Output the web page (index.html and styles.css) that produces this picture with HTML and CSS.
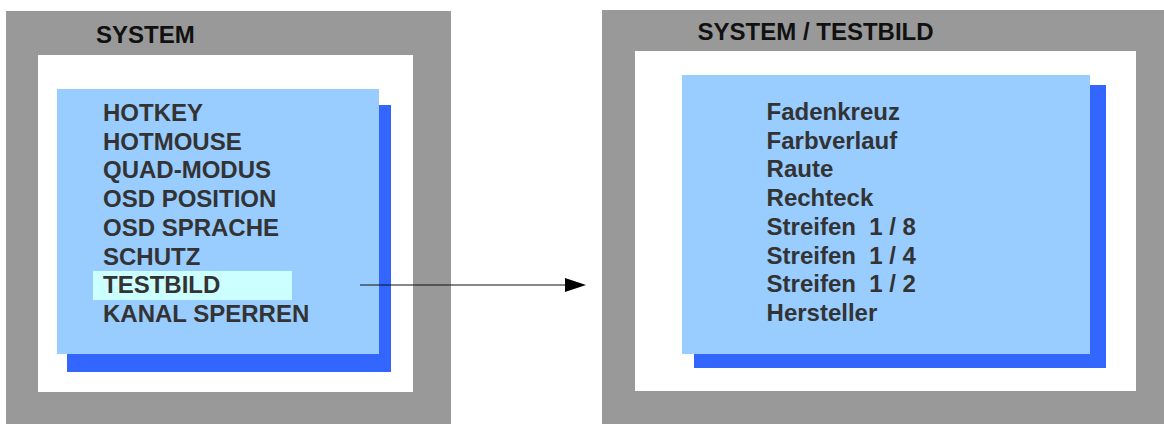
FILE: index.html
```html
<!DOCTYPE html>
<html lang="de">
<head>
  <meta charset="UTF-8">
  <title>OSD Menü System / Testbild</title>
  <link rel="stylesheet" href="styles.css">
</head>
<body>
  <div class="screens">
    <div class="panel panel-left">
      <div class="title">SYSTEM</div>
      <div class="screen">
        <ul class="menu">
          <li>HOTKEY</li>
          <li>HOTMOUSE</li>
          <li>QUAD-MODUS</li>
          <li>OSD POSITION</li>
          <li>OSD SPRACHE</li>
          <li>SCHUTZ</li>
          <li class="sel">TESTBILD</li>
          <li>KANAL SPERREN</li>
        </ul>
      </div>
    </div>

    <div class="panel panel-right">
      <div class="title">SYSTEM / TESTBILD</div>
      <div class="screen">
        <ul class="menu">
          <li>Fadenkreuz</li>
          <li>Farbverlauf</li>
          <li>Raute</li>
          <li>Rechteck</li>
          <li>Streifen &nbsp;1 / 8</li>
          <li>Streifen &nbsp;1 / 4</li>
          <li>Streifen &nbsp;1 / 2</li>
          <li>Hersteller</li>
        </ul>
      </div>
    </div>

    <svg class="arrow" width="230" height="20" viewBox="0 0 230 20">
      <line x1="0" y1="10" x2="210" y2="10" stroke="#111" stroke-width="1.2"/>
      <polygon points="205,3 226,10 205,17" fill="#000"/>
    </svg>
  </div>
</body>
</html>
```

FILE: styles.css
```css
body {
  margin: 0;
  background: white;
  font-family: 'Liberation Sans', Arial, sans-serif;
  overflow: hidden;
}
.screens {
  position: relative;
  display: flex;
  align-items: flex-start;
  height: 424px;
}
.panel {
  background-color: #999999;
  box-sizing: border-box;
}
.title {
  font-size: 24px;
  font-weight: bold;
  line-height: 27px;
  color: #111;
  box-sizing: border-box;
}
.screen {
  background-color: white;
  box-sizing: border-box;
}
.menu {
  list-style: none;
  margin: 0;
  background-color: #99ccff;
  font-size: 24px;
  font-weight: bold;
  line-height: 28.7px;
  color: #333;
  box-sizing: border-box;
}

/* linkes Menü */
.panel-left {
  margin: 11px 0 0 6px;
  width: 445px;
  height: 413px;
  padding-left: 32px;
}
.panel-left .title {
  height: 44px;
  padding: 10px 0 0 58px;
}
.panel-left .screen {
  width: 375px;
  height: 337px;
  padding: 34px 0 0 19px;
}
.panel-left .menu {
  width: 322px;
  height: 265px;
  padding: 10px 0 0 36px;
  box-shadow: 11px 17px 0 1px #3366ff;
}
.menu li {
  padding-left: 10px;
  white-space: pre;
}
.menu .sel {
  background-color: #ccffff;
  width: 199px;
  box-sizing: border-box;
}

/* rechtes Menü */
.panel-right {
  margin: 10px 0 0 151px;
  width: 563px;
  height: 414px;
  padding-left: 33px;
}
.panel-right .title {
  height: 41px;
  padding: 8px 0 0 63px;
}
.panel-right .screen {
  width: 501px;
  height: 340px;
  padding: 24px 0 0 47px;
}
.panel-right .menu {
  width: 408px;
  height: 279px;
  padding: 23px 0 0 75px;
  box-shadow: 14px 12px 0 2px #3366ff;
}

.arrow {
  position: absolute;
  left: 360px;
  top: 275px;
}
```
